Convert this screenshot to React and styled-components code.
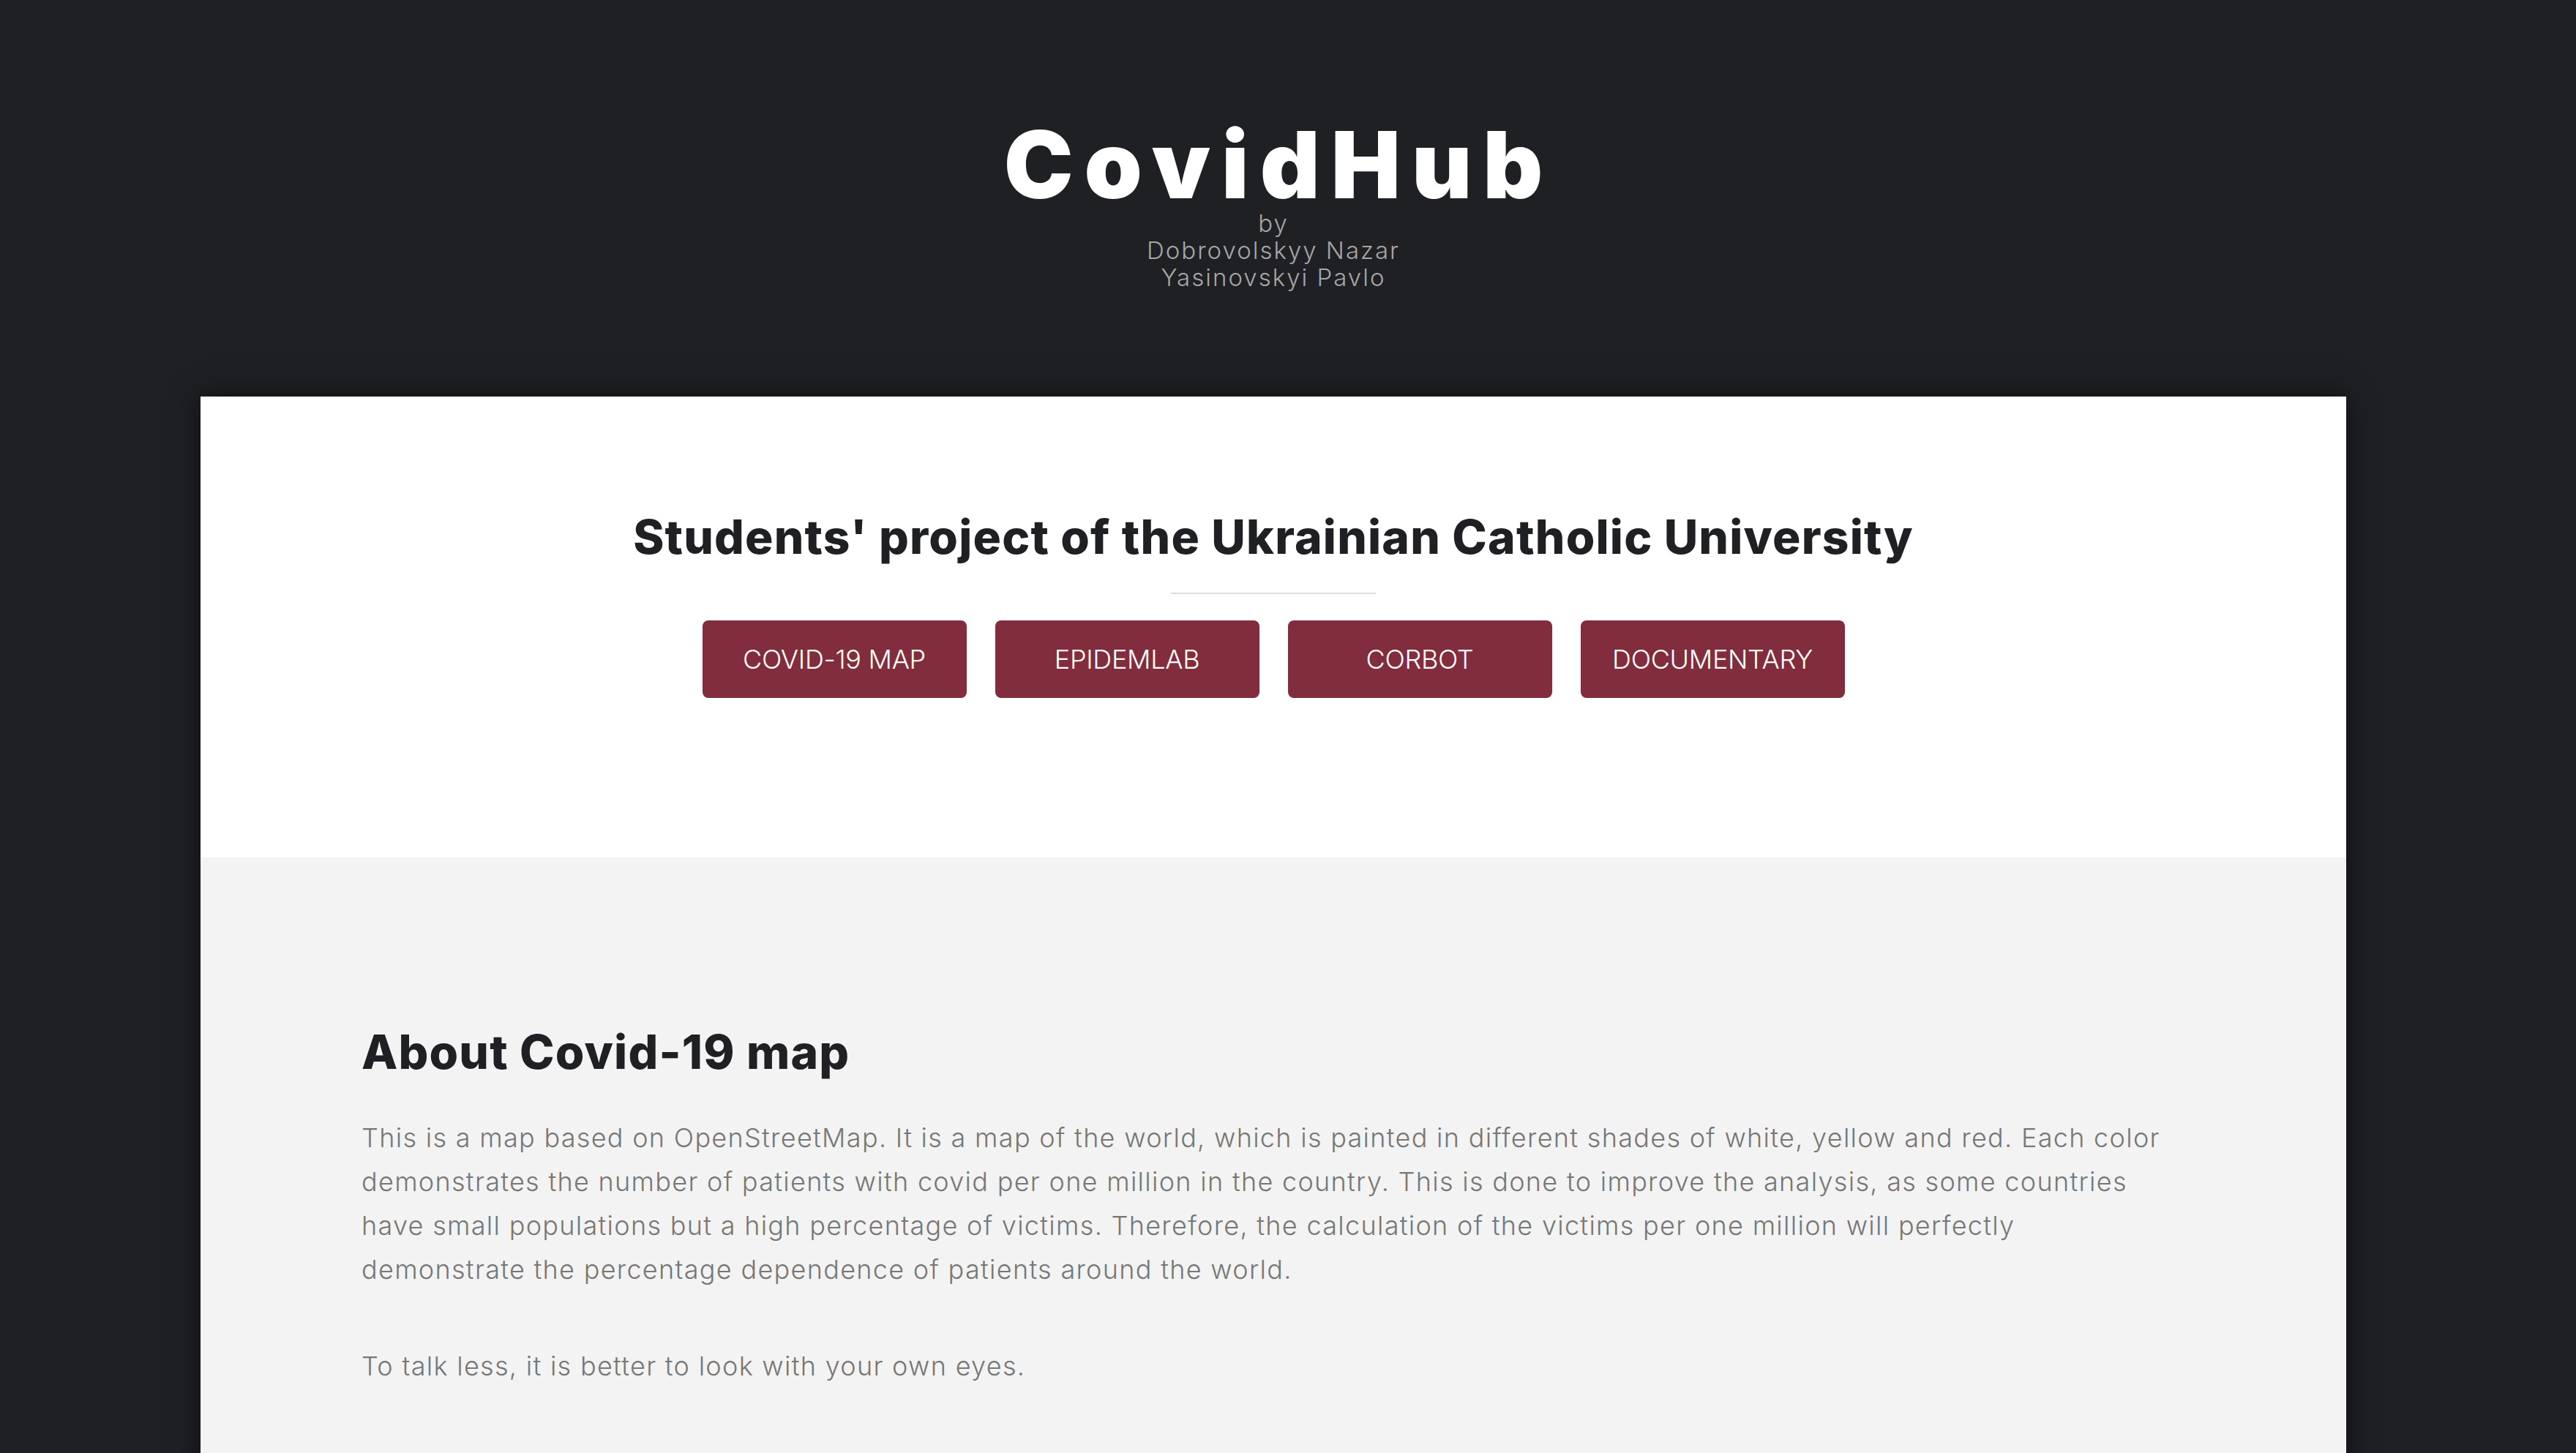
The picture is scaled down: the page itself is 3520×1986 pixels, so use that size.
import React from 'react'
import styled, { createGlobalStyle } from 'styled-components'

const GlobalStyle = createGlobalStyle`
  html, body {
    margin: 0;
    padding: 0;
    background: #1f2024;
  }
  body {
    font-family: Inter, "Open Sans", "Liberation Sans", sans-serif;
  }
`

const Page = styled.div`
  display: flex;
  flex-direction: column;
  align-items: center;
  padding-right: 40px;
  min-height: 100vh;
`

const Header = styled.header`
  display: flex;
  flex-direction: column;
  align-items: center;
  padding-top: 163px;
`

const Title = styled.h1`
  margin: 0 -15px 0 0;
  font-size: 127px;
  line-height: 124px;
  font-weight: 900;
  color: #fff;
  letter-spacing: 15px;
`

const Byline = styled.div`
  font-size: 33px;
  line-height: 37px;
  font-weight: 300;
  color: #a6a6a8;
  text-align: center;
  letter-spacing: 2px;
`

const Card = styled.main`
  width: 2932px;
  margin-top: 144px;
  box-shadow: 0 0 40px rgba(0, 0, 0, 0.55);
`

const Intro = styled.section`
  background: #fff;
  padding: 154px 0 218px;
  display: flex;
  flex-direction: column;
  align-items: center;
`

const Heading = styled.h2`
  margin: 0;
  font-size: 64px;
  line-height: 76.8px;
  font-weight: 800;
  color: #1f2024;
  letter-spacing: 1.2px;
`

const Divider = styled.hr`
  width: 280px;
  height: 2px;
  border: 0;
  background: #dedede;
  margin: 37px 0 36px;
`

const ButtonRow = styled.nav`
  display: flex;
  gap: 39px;
`

const Button = styled.a`
  width: 361px;
  height: 106px;
  display: flex;
  align-items: center;
  justify-content: center;
  background: #822d3e;
  border-radius: 8px;
  color: #fff;
  font-size: 36px;
  font-weight: 300;
  text-transform: uppercase;
  text-decoration: none;
  letter-spacing: -0.3px;
`

const About = styled.section`
  background: #f3f3f3;
  padding: 228px 220px 120px;
`

const Paragraph = styled.p`
  margin: ${p => (p.$first ? '48px' : '72px')} 0 0;
  font-size: 36px;
  line-height: 60px;
  font-weight: 300;
  color: #777;
  letter-spacing: 1.3px;
`

const links = ['Covid-19 map', 'EpidemLab', 'CorBot', 'Documentary']

export default function App() {
  return (
    <>
      <GlobalStyle />
      <Page>
        <Header>
          <Title>CovidHub</Title>
          <Byline>
            by<br />
            Dobrovolskyy Nazar<br />
            Yasinovskyi Pavlo
          </Byline>
        </Header>
        <Card>
          <Intro>
            <Heading>Students' project of the Ukrainian Catholic University</Heading>
            <Divider />
            <ButtonRow>
              {links.map(l => (
                <Button key={l} href="#">{l}</Button>
              ))}
            </ButtonRow>
          </Intro>
          <About>
            <Heading as="h3">About Covid-19 map</Heading>
            <Paragraph $first>
              This is a map based on OpenStreetMap. It is a map of the world, which is painted in different shades of white, yellow and red. Each color demonstrates the number of patients with covid per one million in the country. This is done to improve the analysis, as some countries have small populations but a high percentage of victims. Therefore, the calculation of the victims per one million will perfectly demonstrate the percentage dependence of patients around the world.
            </Paragraph>
            <Paragraph>To talk less, it is better to look with your own eyes.</Paragraph>
          </About>
        </Card>
      </Page>
    </>
  )
}
